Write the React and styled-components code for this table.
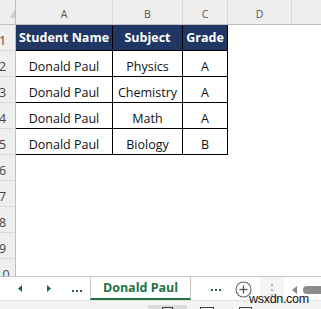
import React from "react";
import styled, { createGlobalStyle } from "styled-components";

const Global = createGlobalStyle`
  html, body { margin: 0; padding: 0; width: 321px; height: 309px; overflow: hidden; background: #fff; }
  #root { width: 321px; height: 309px; overflow: hidden; }
  * { box-sizing: border-box; }
`;

const Frame = styled.div`
  position: relative;
  display: flex;
  flex-direction: column;
  width: 321px;
  height: 309px;
  overflow: hidden;
  font-family: "Open Sans", "Noto Sans", sans-serif;
`;

const Sheet = styled.div`
  flex: none;
  display: grid;
  grid-template-columns: 16px 97px 70px 45px 64px 64px;
  grid-template-rows: 25px repeat(10, 26px);
  height: 276px;
  overflow: hidden;
`;

const Corner = styled.div`
  background: #efefef;
  border-right: 1px solid #bfbfbf;
  border-bottom: 1px solid #bfbfbf;
  display: flex;
  justify-content: flex-end;
  align-items: flex-end;
  padding-bottom: 6px;
`;

const ColHead = styled.div`
  background: #efefef;
  border-right: 1px solid #d9d9d9;
  border-bottom: 1px solid #bfbfbf;
  display: flex;
  justify-content: center;
  align-items: flex-end;
  padding-bottom: 3px;
  font-size: 10.5px;
  line-height: 14px;
  color: #555;
`;

const RowHead = styled.div`
  background: #efefef;
  border-right: 1px solid #bfbfbf;
  border-bottom: 1px solid #d9d9d9;
  display: flex;
  justify-content: center;
  align-items: flex-end;
  padding-right: 10px;
  padding-bottom: 1px;
  font-size: 12.5px;
  line-height: 17px;
  color: #444;
  white-space: nowrap;
`;

const Cell = styled.div`
  display: flex;
  justify-content: center;
  align-items: ${(p) => (p.$head ? "center" : "flex-end")};
  padding-bottom: ${(p) => (p.$head ? "0" : "1px")};
  font-size: 12.5px;
  line-height: 17px;
  white-space: nowrap;
  font-weight: ${(p) => (p.$head ? 700 : 400)};
  color: ${(p) => (p.$head ? "#fff" : "#111")};
  background: ${(p) => (p.$head ? "#203764" : "transparent")};
  border-right: ${(p) => (p.$table ? "1px solid #000" : "none")};
  border-bottom: ${(p) => (p.$table ? "1px solid #000" : "none")};
`;

const TabBar = styled.div`
  flex: none;
  display: flex;
  height: 24px;
  border-top: 1px solid #c6c6c6;
  background: #fff;
`;

const NavArea = styled.div`
  display: flex;
  align-items: center;
  width: 90px;
  padding-left: 5px;
`;

const NavBtn = styled.div`
  width: ${(p) => p.$w}px;
  display: flex;
  justify-content: center;
  align-items: center;
  padding-top: ${(p) => p.$pt || 0}px;
  color: ${(p) => p.$color || "#22693f"};
`;

const Tab = styled.div`
  width: 101px;
  border-left: 1px solid #c6c6c6;
  border-right: 1px solid #c6c6c6;
  border-bottom: 2px solid #217346;
  display: flex;
  align-items: center;
  justify-content: center;
  font-size: 12.5px;
  font-weight: 700;
  color: #217346;
  white-space: nowrap;
`;

const MoreTabs = styled.div`
  width: 30px;
  margin-left: 10px;
  display: flex;
  justify-content: center;
  align-items: center;
  padding-top: 3px;
  color: #2f5f43;
`;

const AddSheet = styled.div`
  width: 24px;
  display: flex;
  justify-content: center;
  align-items: center;
  padding-top: 2px;
`;

const Splitter = styled.div`
  width: 24px;
  margin-left: 5px;
  background: #f4f4f4;
  display: flex;
  justify-content: center;
  align-items: center;
  padding-top: 2px;
`;

const ScrollArrow = styled.div`
  display: flex;
  align-items: center;
  padding: 2px 6px 0 8px;
`;

const Thumb = styled.div`
  flex: 1;
  align-self: center;
  margin-top: 2px;
  margin-right: -10px;
  height: 8px;
  border-radius: 4px;
  background: #8c8c8c;
`;

const StatusBar = styled.div`
  flex: 1;
  display: flex;
  align-items: stretch;
  padding-left: 148px;
  background: #f3f3f3;
  border-top: 1px solid #e4e4e4;
`;

const ViewBtn = styled.div`
  width: 39px;
  margin-top: 4px;
  display: flex;
  justify-content: center;
  padding-top: 2px;
  background: ${(p) => (p.$active ? "#dcdcdc" : "transparent")};
`;

const ViewIcon = styled.div`
  width: ${(p) => p.$w}px;
  height: 8px;
  border: 1.5px solid #444;
  border-bottom: none;
`;

const Watermark = styled.div`
  position: absolute;
  left: 249px;
  top: 293px;
  font-family: "Liberation Sans", Arial, sans-serif;
  font-size: 12.5px;
  line-height: 12.5px;
  letter-spacing: -0.3px;
  color: #111;
`;

const rows = [
  ["Student Name", "Subject", "Grade"],
  ["Donald Paul", "Physics", "A"],
  ["Donald Paul", "Chemistry", "A"],
  ["Donald Paul", "Math", "A"],
  ["Donald Paul", "Biology", "B"],
];

const Dots = () => (
  <svg width="10" height="2" viewBox="0 0 10 2">
    <rect x="0" y="0" width="2" height="2" fill="currentColor" />
    <rect x="4" y="0" width="2" height="2" fill="currentColor" />
    <rect x="8" y="0" width="2" height="2" fill="currentColor" />
  </svg>
);

export default function App() {
  const cells = [];
  cells.push(
    <Corner key="corner">
      <svg width="5" height="9" viewBox="0 0 5 9">
        <polygon points="5,0 5,9 0,9" fill="#cfcfcf" />
      </svg>
    </Corner>
  );
  ["A", "B", "C", "D", "E"].forEach((c) => cells.push(<ColHead key={c}>{c}</ColHead>));
  for (let r = 0; r < 10; r++) {
    cells.push(<RowHead key={"r" + r}>{r + 1}</RowHead>);
    const data = rows[r];
    for (let c = 0; c < 5; c++) {
      const inTable = data && c < 3;
      cells.push(
        <Cell key={r + "-" + c} $table={inTable} $head={inTable && r === 0}>
          {inTable ? data[c] : ""}
        </Cell>
      );
    }
  }

  return (
    <Frame>
      <Global />
      <Sheet>{cells}</Sheet>
      <TabBar>
        <NavArea>
          <NavBtn $w={29}>
            <svg width="4" height="7" viewBox="0 0 4 7">
              <polygon points="4,0 4,7 0,3.5" fill="currentColor" />
            </svg>
          </NavBtn>
          <NavBtn $w={29}>
            <svg width="4" height="7" viewBox="0 0 4 7">
              <polygon points="0,0 0,7 4,3.5" fill="currentColor" />
            </svg>
          </NavBtn>
          <NavBtn $w={27} $pt={4} $color="#2f5f43">
            <Dots />
          </NavBtn>
        </NavArea>
        <Tab>Donald Paul</Tab>
        <MoreTabs>
          <Dots />
        </MoreTabs>
        <AddSheet>
          <svg width="17" height="17" viewBox="0 0 17 17">
            <circle cx="8.5" cy="8.5" r="7.5" fill="none" stroke="#666" strokeWidth="1.1" />
            <line x1="4.5" y1="8.5" x2="12.5" y2="8.5" stroke="#555" strokeWidth="1.3" />
            <line x1="8.5" y1="4.5" x2="8.5" y2="12.5" stroke="#555" strokeWidth="1.3" />
          </svg>
        </AddSheet>
        <Splitter>
          <svg width="2" height="12" viewBox="0 0 2 12">
            <rect x="0" y="0" width="2" height="2" fill="#b5b5b5" />
            <rect x="0" y="5" width="2" height="2" fill="#b5b5b5" />
            <rect x="0" y="10" width="2" height="2" fill="#b5b5b5" />
          </svg>
        </Splitter>
        <ScrollArrow>
          <svg width="5" height="8" viewBox="0 0 5 8">
            <polygon points="5,0 5,8 0,4" fill="#8a8a8a" />
          </svg>
        </ScrollArrow>
        <Thumb />
      </TabBar>
      <StatusBar>
        <ViewBtn $active>
          <ViewIcon $w={11} />
        </ViewBtn>
        <ViewBtn>
          <ViewIcon $w={14} />
        </ViewBtn>
        <ViewBtn>
          <ViewIcon $w={13} />
        </ViewBtn>
      </StatusBar>
      <Watermark>wsxdn.com</Watermark>
    </Frame>
  );
}
